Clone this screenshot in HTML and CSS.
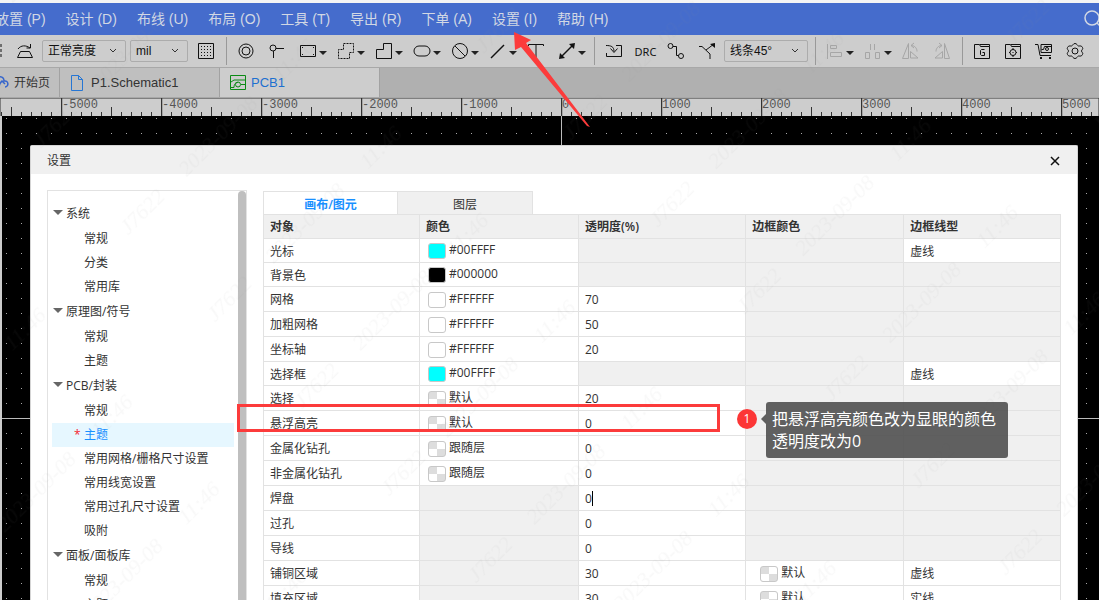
FILE: index.html
```
<!DOCTYPE html>
<html lang="zh-CN">
<head>
<meta charset="utf-8">
<title>PCB 设置</title>
<link rel="stylesheet" href="styles.css">
</head>
<body>
<div class="app">
<nav class="menu">
<button>放置 (P)</button><button>设计 (D)</button><button>布线 (U)</button><button>布局 (O)</button><button>工具 (T)</button><button>导出 (R)</button><button>下单 (A)</button><button>设置 (I)</button><button>帮助 (H)</button>
<button class="search" aria-label="搜索"><svg width="20" height="20" viewBox="0 0 20 20"><circle cx="8" cy="9" r="7"/><path d="M13 14l5 5"/></svg></button>
</nav>
<div class="toolbar">
<button class="tool" aria-label="选框"><svg viewBox="0 0 24 24"><path d="M4 5h15v14H4z" stroke-dasharray="3 2"/></svg></button>
<button class="tool" aria-label="旋转"><svg viewBox="0 0 24 24"><path d="M7.500 12.500h9l3 6h-15zM5 10c3-4 8-4 12-1M17.500 5v4h-4"/></svg></button>
<span class="pick pick-wide"><select aria-label="亮度"><option>正常亮度</option></select><svg viewBox="0 0 8 8"><path d="M1 2l3 3 3-3"/></svg></span>
<span class="pick pick-unit"><select aria-label="单位"><option>mil</option></select><svg viewBox="0 0 8 8"><path d="M1 2l3 3 3-3"/></svg></span>
<button class="tool" aria-label="网格"><svg viewBox="0 0 24 24"><path d="M4.500 4.500h15v15h-15z"/><path d="M7 7.500h11M7 10.500h11M7 13.500h11M7 16.500h11" stroke-dasharray="1 2"/></svg></button>
<i class="sep"></i>
<button class="tool" aria-label="焊盘"><svg viewBox="0 0 24 24"><circle cx="12" cy="12" r="7"/><circle cx="12" cy="12" r="4"/></svg></button>
<button class="tool" aria-label="过孔"><svg viewBox="0 0 24 24"><circle cx="8" cy="9" r="3"/><path d="M11 9.500h8M8.500 12v7"/></svg></button>
<button class="tool drop" aria-label="矩形"><svg viewBox="0 0 24 24"><path d="M4.500 6.500h15v11h-15z"/><path d="M6 8.500h1M17 8.500h1M6 15.500h1M17 15.500h1"/></svg></button>
<button class="tool drop" aria-label="区域"><svg viewBox="0 0 24 24"><path d="M9.500 4.500h10v9h-4v6h-11v-9h5z" stroke-dasharray="2 1"/></svg></button>
<button class="tool drop" aria-label="铺铜"><svg viewBox="0 0 24 24"><path d="M11.500 4.500h8v15h-15v-9h7z"/></svg></button>
<button class="tool drop" aria-label="圆角"><svg viewBox="0 0 24 24"><rect x="4" y="7" width="16" height="10" rx="5"/></svg></button>
<button class="tool drop" aria-label="禁止区域"><svg viewBox="0 0 24 24"><circle cx="12" cy="12" r="7.500"/><path d="M7 7l10 10"/></svg></button>
<button class="tool drop" aria-label="线条"><svg viewBox="0 0 24 24"><path d="M5 19L18 6" stroke-width="1.500"/></svg></button>
<button class="tool" aria-label="文本"><svg viewBox="0 0 24 24"><path d="M4.500 7V5.500h15V7M12 5.500V19"/></svg></button>
<button class="tool drop" aria-label="尺寸"><svg viewBox="0 0 24 24"><path d="M6 18L18 6" stroke-width="1.500"/><path d="M4 20l1-6 5 5zM20 4l-1 6-5-5z" class="solid"/></svg></button>
<i class="sep"></i>
<button class="tool" aria-label="导入"><svg viewBox="0 0 24 24"><path d="M14 6.500h5.500v11h-15V14M4 6.500c5 0 8 1 8 6M8.500 9.500l3.500 4 3.500-4"/></svg></button>
<button class="tool drc">DRC</button>
<button class="tool" aria-label="布线"><svg viewBox="0 0 24 24"><circle cx="6.500" cy="7" r="2.500"/><circle cx="17" cy="17" r="2.500"/><path d="M9 7.500h3.500v9h2"/></svg></button>
<button class="tool" aria-label="差分"><svg viewBox="0 0 24 24"><path d="M4 7.500h3l8 7.500v5M11 11l8-6"/><path d="M20 4v5l-5-4z" class="solid"/></svg></button>
<span class="pick pick-wide"><select aria-label="线条角度"><option>线条45°</option></select><svg viewBox="0 0 8 8"><path d="M1 2l3 3 3-3"/></svg></span>
<i class="sep"></i>
<button class="tool drop dim" aria-label="对齐"><svg viewBox="0 0 24 24"><path d="M4.500 5v15M7.500 6.500h6v3h-6zM7.500 13.500h11v4h-11z"/></svg></button>
<button class="tool drop dim" aria-label="分布"><svg viewBox="0 0 24 24"><path d="M9.500 5v6M13.500 5v6M4.500 13.500h4v6h-4zM14.500 13.500h4v6h-4z"/></svg></button>
<button class="tool dim" aria-label="左旋转"><svg viewBox="0 0 24 24"><path d="M9.500 4.500v15h-6zM11.500 12.500l7.500 6.500h-7.500zM12 6.500c4 0 6 3 6 6M15 4l-3 2.500 3 2.500"/></svg></button>
<button class="tool dim" aria-label="右旋转"><svg viewBox="0 0 24 24"><path d="M14.500 4.500v15h5zM12.500 12.500v6.500H5zM6 12.500c0-3 2-6 6-6M9 4l3 2.500-3 2.500"/></svg></button>
<i class="sep"></i>
<button class="tool" aria-label="Gerber"><svg viewBox="0 0 24 24"><path d="M4.500 19.500v-14h5l1 2h9v12zM10 5.500h9.500v2"/><path d="M14.500 10.500h-3l-1 1v4l1 1h3v-3h-2"/></svg></button>
<button class="tool" aria-label="坐标文件"><svg viewBox="0 0 24 24"><path d="M4.500 19.500v-14h5l1 2h9v12zM10 5.500h9.500v2M12 9v2M12 16v2M8 13.500h1M15 13.500h1"/><circle cx="12" cy="13.500" r="3"/><path d="M11.500 13.500h1"/></svg></button>
<button class="tool" aria-label="下单"><svg viewBox="0 0 24 24"><path d="M3 5.500h3l2 11h11M9 5.500h10.500v8H9z"/><path d="M9.500 10.500h2l1-3h7"/><circle cx="15" cy="10" r="1.500"/><path d="M8 19h2m7 0h2" stroke-width="2"/></svg></button>
<button class="tool" aria-label="设置"><svg viewBox="0 0 24 24"><path d="M12 4.500c2 0 2 2 3.500 2.500 2 0 3-.5 4 1.500 1 2-1 2-1 3.500s2 1.500 1 3.500c-1 2-2 1.500-4 1.500-1.500.5-1.500 2.500-3.500 2.500s-2-2-3.500-2.500c-2 0-3 .5-4-1.500-1-2 1-2 1-3.500s-2-1.500-1-3.500c1-2 2-1.500 4-1.500C10 6.500 10 4.500 12 4.500z"/><circle cx="12" cy="12" r="3"/></svg></button>
</div>
<div class="tabs">
<button class="tab tab-home"><svg width="16" height="16" viewBox="0 0 16 16"><path d="M2 5c2-5 9-4 9 1 5-1 5 6 1 6M6 13c0-3 1-5 3-7l3 3" stroke="#3565cc" stroke-width="1.500"/></svg>开始页</button>
<button class="tab tab-doc"><svg width="16" height="16" viewBox="0 0 16 16"><path d="M1.500.500h7l4 4v11h-11zM8.500.500v4h4" stroke="#2676d4"/></svg>P1.Schematic1</button>
<button class="tab tab-doc on"><svg width="16" height="16" viewBox="0 0 16 16"><path d="M.500.500h15v14H.500zM1 7l3-2h11M1 12.500h3c0-5 3-5 4-5M11 9.500h4" stroke="#0a8a14"/><circle cx="8" cy="9.500" r="2.500" stroke="#0a8a14"/></svg>PCB1</button>
</div>
<svg class="ruler" height="19">
<defs>
<pattern id="ticks" x="61" width="100" height="19" patternUnits="userSpaceOnUse"><path d="M.500 0v19" stroke-width="1.500"/><path d="M50.500 9v10M10.500 14v5M20.500 14v5M30.500 14v5M40.500 14v5M60.500 14v5M70.500 14v5M80.500 14v5M90.500 14v5"/></pattern>
</defs>
<rect width="100%" height="19" fill="url(#ticks)"/>
<text x="62" y="10">-5000</text><text x="162" y="10">-4000</text><text x="262" y="10">-3000</text><text x="362" y="10">-2000</text><text x="462" y="10">-1000</text><text x="562" y="10">0</text><text x="662" y="10">1000</text><text x="762" y="10">2000</text><text x="862" y="10">3000</text><text x="962" y="10">4000</text><text x="1062" y="10">5000</text>
</svg>
<main class="board">
<svg class="dots"><defs><pattern id="grid" x="4" y="2" width="15" height="15" patternUnits="userSpaceOnUse"><rect width="1" height="1" fill="#aaa"/></pattern></defs><rect width="100%" height="100%" fill="url(#grid)"/><path d="M559.500 0v2000M0 302.500h4000" stroke="#bbb"/></svg>
<section class="dialog" role="dialog" aria-label="设置">
<header class="dialog-head"><span>设置</span><button aria-label="关闭"><svg width="10" height="10" viewBox="0 0 10 10"><path d="M1 1l8 8M9 1L1 9"/></svg></button></header>
<div class="dialog-body">
<aside class="side">
<ul class="tree">
<li class="group">系统</li><li>常规</li><li>分类</li><li>常用库</li>
<li class="group">原理图/符号</li><li>常规</li><li>主题</li>
<li class="group">PCB/封装</li><li>常规</li><li class="current">主题</li><li>常用网格/栅格尺寸设置</li><li>常用线宽设置</li><li>常用过孔尺寸设置</li><li>吸附</li>
<li class="group">面板/面板库</li><li>常规</li><li>主题</li>
</ul>
<div class="scrollbar"></div>
</aside>
<div class="content">
<div class="switch"><button class="on">画布/图元</button><button>图层</button></div>
<table class="theme">
<colgroup><col class="c1"><col class="c2"><col class="c3"><col class="c4"><col></colgroup>
<thead><tr><th>对象</th><th>颜色</th><th>透明度(%)</th><th>边框颜色</th><th>边框线型</th></tr></thead>
<tbody>
<tr><td>光标</td><td><button class="color"><i class="sw cyan"></i>#00FFFF</button></td><td class="off"></td><td class="off"></td><td>虚线</td></tr>
<tr><td>背景色</td><td><button class="color"><i class="sw black"></i>#000000</button></td><td class="off"></td><td class="off"></td><td class="off"></td></tr>
<tr class="tall"><td>网格</td><td><button class="color"><i class="sw"></i>#FFFFFF</button></td><td><input aria-label="网格透明度" value="70"></td><td class="off"></td><td class="off"></td></tr>
<tr class="tall"><td>加粗网格</td><td><button class="color"><i class="sw"></i>#FFFFFF</button></td><td><input aria-label="加粗网格透明度" value="50"></td><td class="off"></td><td class="off"></td></tr>
<tr class="tall"><td>坐标轴</td><td><button class="color"><i class="sw"></i>#FFFFFF</button></td><td><input aria-label="坐标轴透明度" value="20"></td><td class="off"></td><td class="off"></td></tr>
<tr><td>选择框</td><td><button class="color"><i class="sw cyan"></i>#00FFFF</button></td><td class="off"></td><td class="off"></td><td>虚线</td></tr>
<tr class="tall"><td>选择</td><td><button class="color"><i class="sw check"></i>默认</button></td><td><input aria-label="选择透明度" value="20"></td><td class="off"></td><td class="off"></td></tr>
<tr class="tall"><td>悬浮高亮</td><td><button class="color"><i class="sw check"></i>默认</button></td><td><input aria-label="悬浮高亮透明度" value="0"></td><td class="off"></td><td class="off"></td></tr>
<tr class="tall"><td>金属化钻孔</td><td><button class="color"><i class="sw check"></i>跟随层</button></td><td><input aria-label="金属化钻孔透明度" value="0"></td><td class="off"></td><td class="off"></td></tr>
<tr class="tall"><td>非金属化钻孔</td><td><button class="color"><i class="sw check"></i>跟随层</button></td><td><input aria-label="非金属化钻孔透明度" value="0"></td><td class="off"></td><td class="off"></td></tr>
<tr class="tall"><td>焊盘</td><td class="off"></td><td class="editing"><input aria-label="焊盘透明度" value="0"></td><td class="off"></td><td class="off"></td></tr>
<tr class="tall"><td>过孔</td><td class="off"></td><td><input aria-label="过孔透明度" value="0"></td><td class="off"></td><td class="off"></td></tr>
<tr class="tall"><td>导线</td><td class="off"></td><td><input aria-label="导线透明度" value="0"></td><td class="off"></td><td class="off"></td></tr>
<tr class="tall"><td>铺铜区域</td><td class="off"></td><td><input aria-label="铺铜区域透明度" value="30"></td><td class="edge"><button class="color"><i class="sw check"></i>默认</button></td><td>虚线</td></tr>
<tr class="tall"><td>填充区域</td><td class="off"></td><td><input aria-label="填充区域透明度" value="30"></td><td class="edge"><button class="color"><i class="sw check"></i>默认</button></td><td>实线</td></tr>
</tbody>
</table>
</div>
</div>
</section>
</main>
<svg class="watermark" aria-hidden="true"><defs><pattern id="stamp" x="-190" y="-61" width="380" height="123" patternUnits="userSpaceOnUse" patternTransform="translate(218 136) rotate(-45)"><text x="83" y="68">J7622</text><text x="190" y="68">2023-09-08</text><text x="297" y="68">11:46</text></pattern></defs><rect width="100%" height="100%" fill="url(#stamp)"/></svg>
<svg class="pointer" width="82" height="100" viewBox="0 0 82 100"><path d="M4 1l17 8-5 3 64 84-3-1L11 16l-6 3z"/></svg>
<div class="frame"></div>
<div class="badge">1</div>
<div class="note">把悬浮高亮颜色改为显眼的颜色<br>透明度改为0</div>
</div>
</body>
</html>
```
FILE: styles.css
```
* { box-sizing: border-box; }
body {
  margin: 0;
  font: 12px/18px "Open Sans", "Noto Sans CJK SC", sans-serif;
  color: #333;
  background: #000;
}
button, select, input { font: inherit; color: inherit; border: 0; padding: 0; margin: 0; background: none; }
svg { fill: none; flex: none; }
.app { position: relative; height: 100vh; overflow: hidden; display: flex; flex-direction: column; }

.menu {
  flex: none; display: flex; gap: 20px; height: 35px;
  border-top: 3px solid #f4f4f4; background: #456ccc; overflow: hidden;
  font-family: "Liberation Sans", "Noto Sans CJK SC", sans-serif; font-size: 14px; color: #d2d8e4;
}
.menu button { white-space: nowrap; flex: none; }
.menu button:first-child { margin-left: -5px; }
.menu .search { margin-left: auto; margin-right: -5px; height: 32px; display: flex; align-items: center; }
.search svg { stroke: #d2d8e4; stroke-width: 1.500; }

.toolbar {
  flex: none; display: flex; align-items: center; height: 33px; background: #cdcdcd;
  border-bottom: 1px solid #a8a8a8; color: #111; overflow: hidden;
}
.tool { flex: none; width: 31px; height: 32px; display: flex; align-items: center; padding-left: 3px; }
.tool:first-child { margin-left: -21px; }
.tool svg { width: 24px; height: 24px; stroke: #111; }
.tool .solid { fill: #111; stroke: none; }
.drop { width: 38px; }
.drop::after { content: ""; flex: none; border: 4px solid transparent; border-top-color: #222; border-bottom: 0; margin-top: 3px; margin-left: -1px; }
.dim svg { stroke: #a6a6a6; }
.drc { font: 11px "Noto Sans", sans-serif; padding: 0; justify-content: center; }
.sep { flex: none; width: 1px; height: 28px; margin: 0 4px; background: #999; }
.pick { position: relative; flex: none; display: flex; height: 22px; border: 1px solid #acacac; border-radius: 2px; }
.pick select { appearance: none; width: 100%; padding-left: 5px; font-family: "Liberation Sans", "Noto Sans CJK SC", sans-serif; }
.pick svg { position: absolute; right: 8px; top: 6px; width: 8px; height: 8px; stroke: #333; pointer-events: none; }
.pick-wide { width: 84px; margin: 0 3px 0 1px; }
.pick-unit { width: 58px; margin: 0 3px 0 1px; }

.tabs {
  flex: none; display: flex; height: 29px; background: #b0b0b0;
  font-family: "Liberation Sans", "Noto Sans CJK SC", sans-serif; font-size: 13px;
}
.tab { display: flex; align-items: center; gap: 5px; background: #bfbfbf; border-right: 1px solid #a2a2a2; padding: 0 10px; white-space: nowrap; }
.tab-home { width: 60px; padding: 0; font-size: 12px; }
.tab-home svg { margin-left: -7px; }
.tab-doc { width: 160px; }
.tab.on { background: #cdcdcd; color: #1d70d0; }

.ruler { width: 100%; height: 19px; background: #cdcdcd; border-top: 1px solid #a8a8a8; stroke: #333; }
.ruler text { fill: #555; stroke: none; font: 12px "Liberation Mono", monospace; }

.board {
  position: relative; flex: 1; min-height: 0; padding: 29px 21px 0 28px; background: #000;
  border-left: 2px solid #cdcdcd;
}
.dots { position: absolute; left: 0; top: 0; width: 100%; height: 100%; }

.dialog { position: relative; height: 100%; display: flex; flex-direction: column; background: #fff; border: 1px solid #d5d5d5; border-bottom: 0; border-radius: 2px 2px 0 0; overflow: hidden; }
.dialog-head { flex: none; display: flex; justify-content: space-between; align-items: center; height: 28px; padding: 1px 17px 0 16px; background: #f0f0f0; }
.dialog-head button { display: flex; }
.dialog-head svg { stroke: #111; stroke-width: 1.500; }
.dialog-body { flex: 1; min-height: 0; display: flex; gap: 16px; padding: 16px 16px 0 16px; }

.side { flex: none; width: 200px; display: flex; border: 1px solid #e2e2e2; border-bottom: 0; overflow: hidden; }
.tree { flex: 1; margin: 0 4px; padding: 10px 0 0; list-style: none; }
.tree li { height: 24px; line-height: 24px; padding-left: 32px; white-space: nowrap; }
.tree .group { display: flex; align-items: center; gap: 3px; height: 26px; line-height: 26px; padding-left: 1px; }
.group::before { content: ""; border: 5px solid transparent; border-top-color: #666; border-bottom: 0; margin-top: -4px; }
.tree .current { background: #e6f7ff; color: #1890ff; padding-left: 22px; }
.current::before { content: "*"; color: #f5222d; display: inline-block; width: 10px; }
.scrollbar { flex: none; width: 8px; background: #bfbfbf; border-radius: 4px 4px 0 0; }

.content { flex: 1; min-width: 0; padding-top: 1px; }
.switch { display: flex; height: 23px; }
.switch button { width: 135px; padding-top: 3px; background: #f0f0f0; border: 1px solid #e2e2e2; border-left: 0; border-bottom: 0; }
.switch .on { background: #fff; color: #1890ff; font-weight: 600; border-left: 1px solid #e2e2e2; }

.theme { width: 100%; table-layout: fixed; border-collapse: collapse; }
.c1 { width: 156px; }
.c2 { width: 159px; }
.c3 { width: 21%; }
.c4 { width: 158px; }
.theme th, .theme td { height: 24px; padding: 0 0 0 6px; border: 1px solid #e2e2e2; text-align: left; line-height: 18px; white-space: nowrap; }
.theme th { background: #f0f0f0; font-weight: 600; }
.theme .tall td { height: 25px; }
.theme td { padding-top: 2px; }
.theme .off { background: #f0f0f0; }
.theme input { display: block; width: 100%; height: 18px; outline: 0; }
.editing { position: relative; }
.editing::after { content: ""; position: absolute; left: 13px; top: 5px; width: 1px; height: 15px; background: #000; }
.color { display: flex; align-items: center; gap: 3px; height: 18px; line-height: 16px; margin-left: 2px; padding-bottom: 3px; }
.edge .color { margin-left: 8px; }
.sw { width: 18px; height: 16px; margin-top: 2px; border: 1px solid #c8c8c8; border-radius: 3px; background: #fff; }
.cyan { background: #0ff; }
.black { background: #000; }
.check { background: conic-gradient(#fff 25%, #ddd 0 50%, #fff 0 75%, #ddd 0); }

.watermark { position: absolute; left: 0; top: 0; width: 100%; height: 100%; pointer-events: none; }
.watermark text { fill: #808080; fill-opacity: .06; font: italic 22px "Liberation Serif", serif; text-anchor: middle; }
.pointer { position: absolute; left: 510px; top: 31px; fill: #fc3b3b; }
.frame { position: absolute; left: 237px; top: 404px; width: 483px; height: 28px; border: 3px solid #fc3b3b; }
.badge { position: absolute; left: 737px; top: 409px; width: 20px; height: 20px; border-radius: 50%; background: #fc3636; color: #fff; text-align: center; line-height: 20px; }
.note { position: absolute; left: 766px; top: 402px; padding: 6px 12px 6px 6px; border-radius: 3px; background: rgba(70, 70, 70, .85); color: #fff; font-size: 16px; line-height: 22px; }
.note::before { content: ""; position: absolute; left: -5px; top: 12px; border: 5px solid transparent; border-right-color: #5f5f5f; border-left: 0; }
```
